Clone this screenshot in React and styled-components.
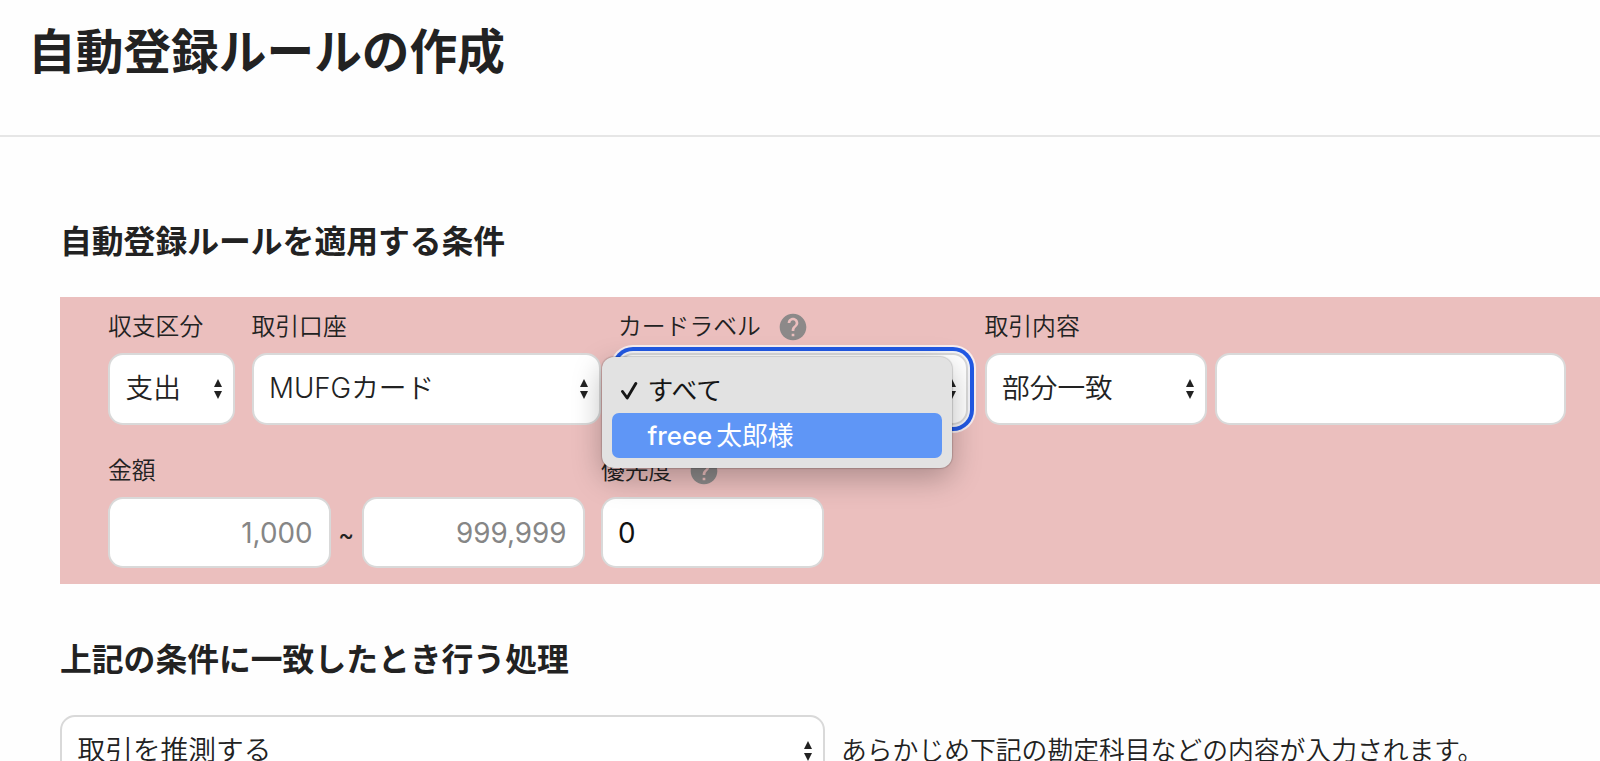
import React from "react";
import styled, { createGlobalStyle } from "styled-components";
import { MdHelp } from "react-icons/md";

const GlobalStyle = createGlobalStyle`
  * {
    box-sizing: border-box;
  }

  body {
    margin: 0;
    overflow: hidden;
    background: #fefefe;
    color: #222;
    font-family: Inter, "Noto Sans CJK JP", sans-serif;
  }
`;

const Page = styled.div`
  height: 761px;
  overflow: hidden;
`;

const Header = styled.header`
  height: 137px;
  padding: 17px 28px 0;
  border-bottom: 2px solid #e6e6e6;
`;

const Title = styled.h1`
  margin: 0;
  font-size: 47.7px;
  font-weight: 700;
  line-height: 70px;
`;

const Main = styled.main`
  padding: 81px 0 0 60px;
`;

const SectionTitle = styled.h2`
  margin: 0;
  font-size: 31.8px;
  font-weight: 700;
  line-height: 48px;
`;

const Conditions = styled.section`
  display: flex;
  flex-direction: column;
  gap: 30px;
  height: 286.5px;
  margin: 31px 0 52.5px;
  padding: 14px 0 0 48px;
  background: #ebbfbe;
`;

const FieldRow = styled.div`
  display: flex;
`;

const Field = styled.div`
  position: relative;
  flex: none;
  width: ${({ $width }) => $width}px;
  margin-right: ${({ $gap }) => $gap || 0}px;
`;

const Label = styled.div`
  display: flex;
  align-items: center;
  gap: 16px;
  height: 32px;
  margin-bottom: 10px;
  font-size: 23.8px;
  font-weight: 350;
  line-height: 32px;
  white-space: nowrap;
  color: #222;

  svg {
    flex: none;
    color: #8c8989;
  }
`;

const Controls = styled.div`
  display: flex;
  align-items: center;
`;

const SelectBox = styled.div`
  display: flex;
  flex: none;
  align-items: center;
  justify-content: space-between;
  width: ${({ $width }) => $width}px;
  height: 71.5px;
  padding: 0 10.5px 1px 15.5px;
  border: 2px solid #d9d9d9;
  border-radius: 15px;
  background: #fff;
  font-size: 27.7px;
  font-weight: 350;
  line-height: 40px;
  white-space: nowrap;
  box-shadow: ${({ $focused }) =>
    $focused
      ? "0 0 0 2px #f4f4f8, 0 0 0 6px #2259e4, 0 0 0 8px #f8eef0"
      : "none"};

  svg {
    flex: none;
    margin-top: 1px;
  }
`;

const TextInput = styled.input`
  display: block;
  flex: none;
  width: ${({ $width }) => $width}px;
  height: 71.5px;
  margin: 0 0 0 ${({ $offset }) => $offset || 0}px;
  padding: 2px 16px 0 15px;
  border: 2px solid #d9d9d9;
  border-radius: 15px;
  outline: none;
  background: #fff;
  color: #111;
  font-family: inherit;
  font-size: 27.8px;
  text-align: ${({ $align }) => $align || "left"};

  &::placeholder {
    color: #868686;
    opacity: 1;
  }
`;

const Tilde = styled.span`
  width: 31.5px;
  padding-top: 4px;
  font-size: 24px;
  text-align: center;
`;

const Menu = styled.ul`
  position: absolute;
  top: 46px;
  left: -16.5px;
  z-index: 1;
  width: 350px;
  height: 111px;
  margin: 0;
  padding: 10px;
  border-radius: 12px;
  background: #e2e2e2;
  box-shadow:
    0 0 1px 1px rgba(0, 0, 0, 0.16),
    0 10px 30px rgba(0, 0, 0, 0.27);
  list-style: none;
`;

const MenuItem = styled.li`
  display: flex;
  align-items: center;
  height: 45.5px;
  padding: 2px 0 0 9px;
  border-radius: 7px;
  background: ${({ $active }) => ($active ? "#5f96f6" : "transparent")};
  color: ${({ $active }) => ($active ? "#fff" : "#161616")};
  font-size: 25.8px;
  line-height: 38px;
`;

const MenuMark = styled.span`
  display: flex;
  width: 27px;
`;

const MenuName = styled.span`
  margin-right: 4px;
  font-weight: 550;
`;

const Action = styled.div`
  display: flex;
  align-items: center;
  margin-top: 31px;
`;

const ActionNote = styled.p`
  margin: 0 0 0 16.5px;
  font-size: 25.8px;
  font-weight: 350;
  line-height: 40px;
  white-space: nowrap;
`;

const Arrows = () => (
  <svg width="8" height="20" viewBox="0 0 8 20" fill="#222">
    <path d="M4 0 8 8H0ZM4 20 0 12h8Z" />
  </svg>
);

const Check = () => (
  <svg width="18" height="20" viewBox="0 0 18 20" fill="none">
    <path
      d="M1.5 10.5 6.2 17 14.8 2.5"
      stroke="#161616"
      strokeWidth="2.9"
      strokeLinecap="round"
      strokeLinejoin="round"
    />
  </svg>
);

const Select = ({ value, width, focused }) => (
  <SelectBox $width={width} $focused={focused}>
    <span>{value}</span>
    <Arrows />
  </SelectBox>
);

const App = () => {
  return (
    <Page>
      <GlobalStyle />
      <Header>
        <Title>自動登録ルールの作成</Title>
      </Header>
      <Main>
        <SectionTitle>自動登録ルールを適用する条件</SectionTitle>
        <Conditions>
          <FieldRow>
            <Field $width={126.5} $gap={17}>
              <Label>収支区分</Label>
              <Select value="支出" width={126.5} />
            </Field>
            <Field $width={349} $gap={17.5}>
              <Label>取引口座</Label>
              <Select value="MUFGカード" width={349} />
            </Field>
            <Field $width={350} $gap={16.5}>
              <Label>
                カードラベル
                <MdHelp size={32} />
              </Label>
              <Select value="" width={350} focused />
              <Menu>
                <MenuItem>
                  <MenuMark>
                    <Check />
                  </MenuMark>
                  すべて
                </MenuItem>
                <MenuItem $active>
                  <MenuMark />
                  <MenuName>freee</MenuName>
                  太郎様
                </MenuItem>
              </Menu>
            </Field>
            <Field $width={582}>
              <Label>取引内容</Label>
              <Controls>
                <Select value="部分一致" width={222} />
                <TextInput $width={350.5} $offset={8.5} />
              </Controls>
            </Field>
          </FieldRow>
          <FieldRow>
            <Field $width={476.5} $gap={16.5}>
              <Label>金額</Label>
              <Controls>
                <TextInput $width={222.5} $align="right" placeholder="1,000" />
                <Tilde>~</Tilde>
                <TextInput
                  $width={222.5}
                  $align="right"
                  placeholder="999,999"
                />
              </Controls>
            </Field>
            <Field $width={222.5}>
              <Label>
                優先度
                <MdHelp size={32} />
              </Label>
              <TextInput $width={222.5} defaultValue="0" />
            </Field>
          </FieldRow>
        </Conditions>
        <SectionTitle>上記の条件に一致したとき行う処理</SectionTitle>
        <Action>
          <Select value="取引を推測する" width={764.5} />
          <ActionNote>
            あらかじめ下記の勘定科目などの内容が入力されます。
          </ActionNote>
        </Action>
      </Main>
    </Page>
  );
};

export default App;
